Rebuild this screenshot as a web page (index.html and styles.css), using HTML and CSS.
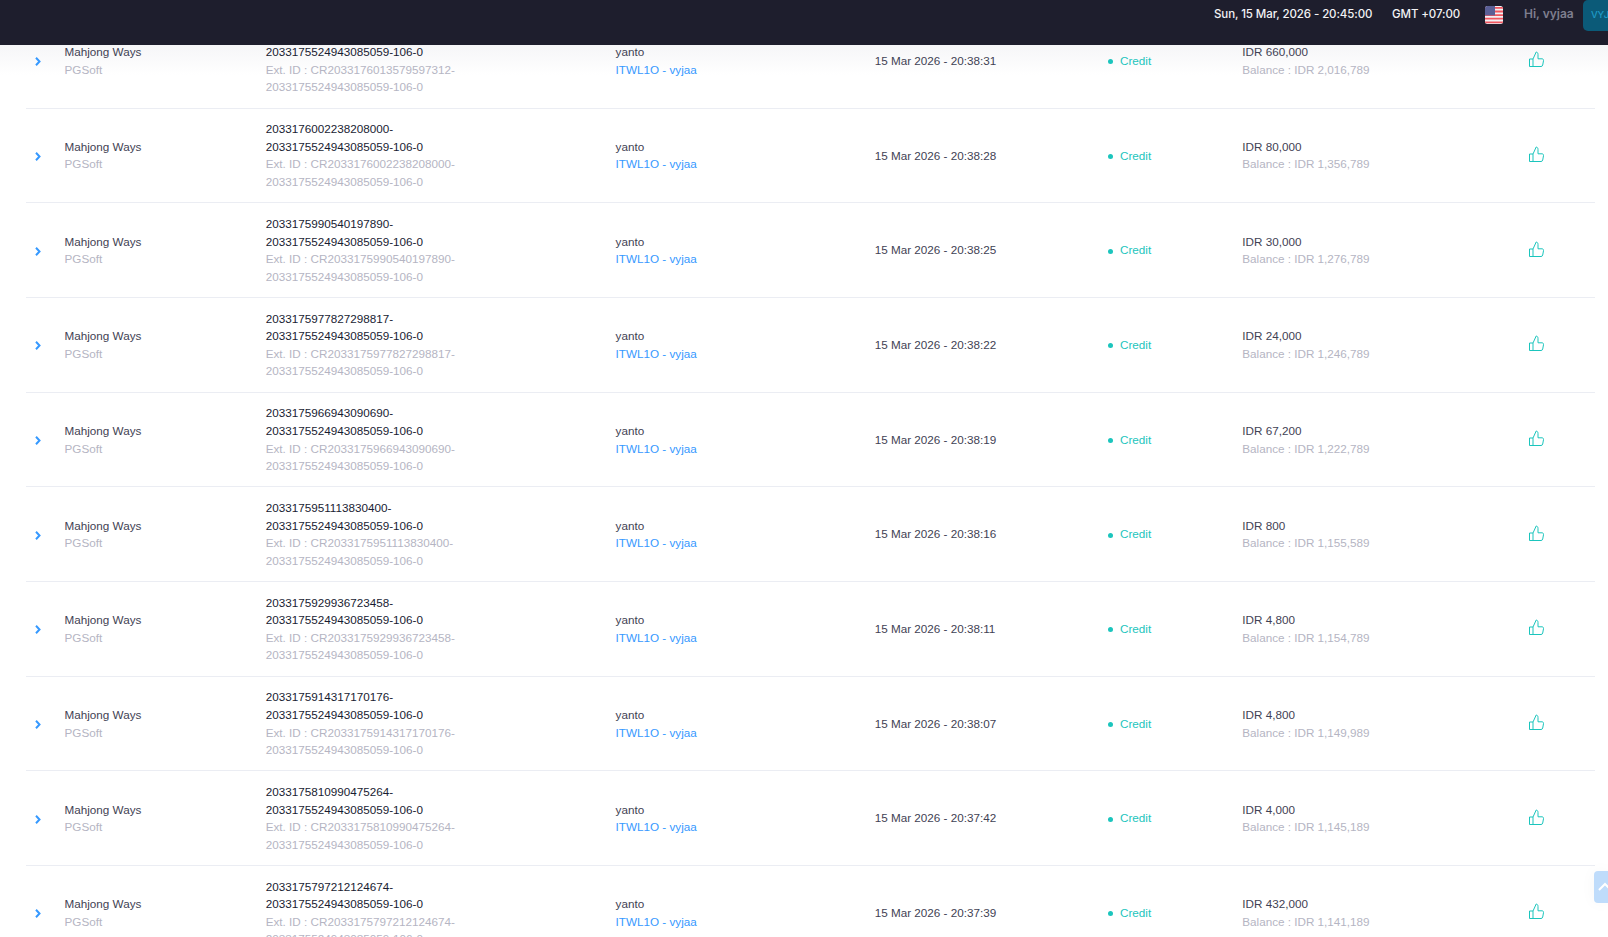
FILE: index.html
```html
<!DOCTYPE html>
<html lang="id">
<head>
    <meta charset="UTF-8">
    <meta name="viewport" content="width=device-width, initial-scale=1.0">
    <title>Transactions</title>
    <link rel="stylesheet" href="styles.css">
</head>
<body>
    <header class="topbar">
        <span class="clock">Sun, 15 Mar, 2026 - 20:45:00</span>
        <span class="zone">GMT +07:00</span>
        <svg class="flag" viewBox="0 0 18 18" aria-label="English">
            <defs><clipPath id="flag-round"><rect width="18" height="18" rx="2.5"/></clipPath></defs>
            <g clip-path="url(#flag-round)">
                <rect width="18" height="18" fill="#f1f1f4"/>
                <path d="M0 1h18v1.8H0zM0 4.6h18v1.8H0zM0 8.2h18V10H0zM0 11.8h18v1.8H0zM0 15.4h18v1.8H0z" fill="#f1565f"/>
                <rect width="10" height="9.4" fill="#5a5f96"/>
            </g>
        </svg>
        <span class="hello">Hi, vyjaa</span>
        <span class="avatar">VYJ</span>
    </header>

    <main class="content">
        <table class="trx">
            <colgroup>
                <col class="c-arrow"><col class="c-game"><col class="c-id"><col class="c-user">
                <col class="c-date"><col class="c-type"><col class="c-amount"><col class="c-act">
            </colgroup>
            <tbody>
                <tr>
                    <td><svg class="arrow" viewBox="0 0 6 9"><path d="M1 .8 4.500 4.500 1 8.200"/></svg></td>
                    <td>Mahjong Ways<small>PGSoft</small></td>
                    <td><div class="ids">2033176013579597312-2033175524943085059-106-0<small>Ext. ID : CR2033176013579597312-2033175524943085059-106-0</small></div></td>
                    <td>yanto<a href="#">ITWL1O - vyjaa</a></td>
                    <td>15 Mar 2026 - 20:38:31</td>
                    <td><span class="credit">Credit</span></td>
                    <td>IDR 660,000<small>Balance : IDR 2,016,789</small></td>
                    <td><svg class="thumb" viewBox="0 0 16 17"><path d="M5 8H1.500v7.500H13c1 0 1.500-.6 1.700-1.400l.8-4.400c.2-1.100-.5-1.900-1.500-1.900H10V3.500C10 2 9.200 1 8.200 1L5 8v7.500"/></svg></td>
                </tr>
                <tr>
                    <td><svg class="arrow" viewBox="0 0 6 9"><path d="M1 .8 4.500 4.500 1 8.200"/></svg></td>
                    <td>Mahjong Ways<small>PGSoft</small></td>
                    <td><div class="ids">2033176002238208000-2033175524943085059-106-0<small>Ext. ID : CR2033176002238208000-2033175524943085059-106-0</small></div></td>
                    <td>yanto<a href="#">ITWL1O - vyjaa</a></td>
                    <td>15 Mar 2026 - 20:38:28</td>
                    <td><span class="credit">Credit</span></td>
                    <td>IDR 80,000<small>Balance : IDR 1,356,789</small></td>
                    <td><svg class="thumb" viewBox="0 0 16 17"><path d="M5 8H1.500v7.500H13c1 0 1.500-.6 1.700-1.400l.8-4.400c.2-1.100-.5-1.900-1.500-1.900H10V3.500C10 2 9.200 1 8.200 1L5 8v7.500"/></svg></td>
                </tr>
                <tr>
                    <td><svg class="arrow" viewBox="0 0 6 9"><path d="M1 .8 4.500 4.500 1 8.200"/></svg></td>
                    <td>Mahjong Ways<small>PGSoft</small></td>
                    <td><div class="ids">2033175990540197890-2033175524943085059-106-0<small>Ext. ID : CR2033175990540197890-2033175524943085059-106-0</small></div></td>
                    <td>yanto<a href="#">ITWL1O - vyjaa</a></td>
                    <td>15 Mar 2026 - 20:38:25</td>
                    <td><span class="credit">Credit</span></td>
                    <td>IDR 30,000<small>Balance : IDR 1,276,789</small></td>
                    <td><svg class="thumb" viewBox="0 0 16 17"><path d="M5 8H1.500v7.500H13c1 0 1.500-.6 1.700-1.400l.8-4.400c.2-1.100-.5-1.900-1.500-1.900H10V3.500C10 2 9.200 1 8.200 1L5 8v7.500"/></svg></td>
                </tr>
                <tr>
                    <td><svg class="arrow" viewBox="0 0 6 9"><path d="M1 .8 4.500 4.500 1 8.200"/></svg></td>
                    <td>Mahjong Ways<small>PGSoft</small></td>
                    <td><div class="ids">2033175977827298817-2033175524943085059-106-0<small>Ext. ID : CR2033175977827298817-2033175524943085059-106-0</small></div></td>
                    <td>yanto<a href="#">ITWL1O - vyjaa</a></td>
                    <td>15 Mar 2026 - 20:38:22</td>
                    <td><span class="credit">Credit</span></td>
                    <td>IDR 24,000<small>Balance : IDR 1,246,789</small></td>
                    <td><svg class="thumb" viewBox="0 0 16 17"><path d="M5 8H1.500v7.500H13c1 0 1.500-.6 1.700-1.400l.8-4.400c.2-1.100-.5-1.900-1.500-1.900H10V3.500C10 2 9.200 1 8.200 1L5 8v7.500"/></svg></td>
                </tr>
                <tr>
                    <td><svg class="arrow" viewBox="0 0 6 9"><path d="M1 .8 4.500 4.500 1 8.200"/></svg></td>
                    <td>Mahjong Ways<small>PGSoft</small></td>
                    <td><div class="ids">2033175966943090690-2033175524943085059-106-0<small>Ext. ID : CR2033175966943090690-2033175524943085059-106-0</small></div></td>
                    <td>yanto<a href="#">ITWL1O - vyjaa</a></td>
                    <td>15 Mar 2026 - 20:38:19</td>
                    <td><span class="credit">Credit</span></td>
                    <td>IDR 67,200<small>Balance : IDR 1,222,789</small></td>
                    <td><svg class="thumb" viewBox="0 0 16 17"><path d="M5 8H1.500v7.500H13c1 0 1.500-.6 1.700-1.400l.8-4.400c.2-1.100-.5-1.900-1.500-1.900H10V3.500C10 2 9.200 1 8.200 1L5 8v7.500"/></svg></td>
                </tr>
                <tr>
                    <td><svg class="arrow" viewBox="0 0 6 9"><path d="M1 .8 4.500 4.500 1 8.200"/></svg></td>
                    <td>Mahjong Ways<small>PGSoft</small></td>
                    <td><div class="ids">2033175951113830400-2033175524943085059-106-0<small>Ext. ID : CR2033175951113830400-2033175524943085059-106-0</small></div></td>
                    <td>yanto<a href="#">ITWL1O - vyjaa</a></td>
                    <td>15 Mar 2026 - 20:38:16</td>
                    <td><span class="credit">Credit</span></td>
                    <td>IDR 800<small>Balance : IDR 1,155,589</small></td>
                    <td><svg class="thumb" viewBox="0 0 16 17"><path d="M5 8H1.500v7.500H13c1 0 1.500-.6 1.700-1.400l.8-4.400c.2-1.100-.5-1.900-1.500-1.900H10V3.500C10 2 9.200 1 8.200 1L5 8v7.500"/></svg></td>
                </tr>
                <tr>
                    <td><svg class="arrow" viewBox="0 0 6 9"><path d="M1 .8 4.500 4.500 1 8.200"/></svg></td>
                    <td>Mahjong Ways<small>PGSoft</small></td>
                    <td><div class="ids">2033175929936723458-2033175524943085059-106-0<small>Ext. ID : CR2033175929936723458-2033175524943085059-106-0</small></div></td>
                    <td>yanto<a href="#">ITWL1O - vyjaa</a></td>
                    <td>15 Mar 2026 - 20:38:11</td>
                    <td><span class="credit">Credit</span></td>
                    <td>IDR 4,800<small>Balance : IDR 1,154,789</small></td>
                    <td><svg class="thumb" viewBox="0 0 16 17"><path d="M5 8H1.500v7.500H13c1 0 1.500-.6 1.700-1.400l.8-4.400c.2-1.100-.5-1.900-1.500-1.900H10V3.500C10 2 9.200 1 8.200 1L5 8v7.500"/></svg></td>
                </tr>
                <tr>
                    <td><svg class="arrow" viewBox="0 0 6 9"><path d="M1 .8 4.500 4.500 1 8.200"/></svg></td>
                    <td>Mahjong Ways<small>PGSoft</small></td>
                    <td><div class="ids">2033175914317170176-2033175524943085059-106-0<small>Ext. ID : CR2033175914317170176-2033175524943085059-106-0</small></div></td>
                    <td>yanto<a href="#">ITWL1O - vyjaa</a></td>
                    <td>15 Mar 2026 - 20:38:07</td>
                    <td><span class="credit">Credit</span></td>
                    <td>IDR 4,800<small>Balance : IDR 1,149,989</small></td>
                    <td><svg class="thumb" viewBox="0 0 16 17"><path d="M5 8H1.500v7.500H13c1 0 1.500-.6 1.700-1.400l.8-4.400c.2-1.100-.5-1.900-1.500-1.900H10V3.500C10 2 9.200 1 8.200 1L5 8v7.500"/></svg></td>
                </tr>
                <tr>
                    <td><svg class="arrow" viewBox="0 0 6 9"><path d="M1 .8 4.500 4.500 1 8.200"/></svg></td>
                    <td>Mahjong Ways<small>PGSoft</small></td>
                    <td><div class="ids">2033175810990475264-2033175524943085059-106-0<small>Ext. ID : CR2033175810990475264-2033175524943085059-106-0</small></div></td>
                    <td>yanto<a href="#">ITWL1O - vyjaa</a></td>
                    <td>15 Mar 2026 - 20:37:42</td>
                    <td><span class="credit">Credit</span></td>
                    <td>IDR 4,000<small>Balance : IDR 1,145,189</small></td>
                    <td><svg class="thumb" viewBox="0 0 16 17"><path d="M5 8H1.500v7.500H13c1 0 1.500-.6 1.700-1.400l.8-4.400c.2-1.100-.5-1.900-1.500-1.900H10V3.500C10 2 9.200 1 8.200 1L5 8v7.500"/></svg></td>
                </tr>
                <tr>
                    <td><svg class="arrow" viewBox="0 0 6 9"><path d="M1 .8 4.500 4.500 1 8.200"/></svg></td>
                    <td>Mahjong Ways<small>PGSoft</small></td>
                    <td><div class="ids">2033175797212124674-2033175524943085059-106-0<small>Ext. ID : CR2033175797212124674-2033175524943085059-106-0</small></div></td>
                    <td>yanto<a href="#">ITWL1O - vyjaa</a></td>
                    <td>15 Mar 2026 - 20:37:39</td>
                    <td><span class="credit">Credit</span></td>
                    <td>IDR 432,000<small>Balance : IDR 1,141,189</small></td>
                    <td><svg class="thumb" viewBox="0 0 16 17"><path d="M5 8H1.500v7.500H13c1 0 1.500-.6 1.700-1.400l.8-4.400c.2-1.100-.5-1.900-1.500-1.900H10V3.500C10 2 9.200 1 8.200 1L5 8v7.500"/></svg></td>
                </tr>
            </tbody>
        </table>
    </main>

    <button class="to-top" aria-label="Back to top">
        <svg viewBox="0 0 14 32"><path d="M5 19l6-6 6 6"/></svg>
    </button>
</body>
</html>
```

FILE: styles.css
```css
html, body {
    height: 100%;
}
body {
    margin: 0;
    overflow: hidden;
    background: #fff linear-gradient(#f6f6f8, #fff) 0 45px / 100% 30px no-repeat;
    font-family: 'Liberation Sans', Arial, sans-serif;
    font-size: 11.7px;
    line-height: 17.55px;
    color: #3f4254;
}

/* top bar */
.topbar {
    position: relative;
    z-index: 2;
    height: 45px;
    box-sizing: border-box;
    display: flex;
    align-items: flex-start;
    background: #1e1e2d;
    font-family: 'Inter', sans-serif;
    font-size: 11.5px;
    font-weight: 500;
    letter-spacing: -0.1px;
    color: #f2f2f5;
}
.clock {
    margin-left: 1214px;
    width: 178px;
    line-height: 28px;
    white-space: nowrap;
}
.zone {
    width: 93px;
    line-height: 28px;
    white-space: nowrap;
}
.flag {
    width: 18px;
    height: 18px;
    margin-top: 6px;
}
.hello {
    margin-left: 21px;
    width: 59px;
    font-size: 12px;
    letter-spacing: 0;
    line-height: 28px;
    color: #7e7e8f;
    font-weight: 600;
    white-space: nowrap;
}
.avatar {
    width: 25px;
    height: 31px;
    box-sizing: border-box;
    padding-left: 8px;
    background: #0b5a78;
    border-radius: 5px 0 0 5px;
    color: #1f9ac6;
    font-size: 9.500px;
    letter-spacing: -0.2px;
    line-height: 29px;
    white-space: nowrap;
}

/* table */
.content {
    margin: -31.100px 13px 0 26px;
}
.trx {
    width: 1569px;
    table-layout: fixed;
    border-collapse: collapse;
}
.c-arrow { width: 38.5px; }
.c-game { width: 201.200px; }
.c-id { width: 349.900px; }
.c-user { width: 259.100px; }
.c-date { width: 233.300px; }
.c-type { width: 134.300px; }
.c-amount { width: 287.700px; }
.c-act { width: 65px; }

.trx td {
    padding: 11.750px 0;
    vertical-align: middle;
    border-bottom: 1px solid #ebedf3;
}
.trx small {
    display: block;
    font-size: inherit;
    color: #b5b5c3;
}
.trx a {
    display: block;
    color: #3699ff;
    text-decoration: none;
}
.ids {
    max-width: 205px;
    color: #181c32;
}
.arrow {
    display: block;
    width: 6px;
    height: 9px;
    margin: 2px 0 0 9px;
    fill: none;
    stroke: #3699ff;
    stroke-width: 2;
}
.credit {
    color: #1bc5bd;
    display: flex;
    align-items: center;
    gap: 7px;
}
.credit::before {
    content: "";
    width: 5px;
    height: 5px;
    margin-top: 2px;
    border-radius: 50%;
    background: #1bc5bd;
}
.thumb {
    display: block;
    width: 16px;
    height: 17px;
    margin: -2px 0 0 -2px;
    fill: none;
    stroke: #1bc5bd;
    stroke-width: 1;
}

/* back to top */
.to-top {
    position: fixed;
    left: 1594px;
    top: 871px;
    width: 14px;
    height: 32px;
    padding: 0;
    border: none;
    border-radius: 4px 0 0 4px;
    background: #bfdcfb;
    box-shadow: 0 0 16px rgba(0, 0, 0, 0.04);
    overflow: hidden;
}
.to-top svg {
    display: block;
    width: 14px;
    height: 32px;
    fill: none;
    stroke: #fff;
    stroke-width: 2;
}
```
